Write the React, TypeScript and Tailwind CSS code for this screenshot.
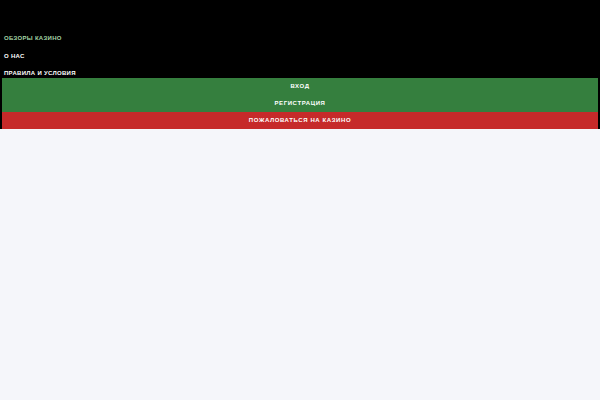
const navLinks = [
  { label: "Обзоры казино", active: true },
  { label: "О нас", active: false },
  { label: "Правила и условия", active: false },
];

const buttons = [
  { label: "Вход", color: "bg-[#357f3e]" },
  { label: "Регистрация", color: "bg-[#357f3e]" },
  { label: "Пожаловаться на казино", color: "bg-[#c62a2a]" },
];

export default function App() {
  return (
    <div className="min-h-screen bg-[#f5f6fa] font-['Liberation_Sans',Arial,sans-serif]">
      <header className="bg-black pt-[34px]">
        <nav className="flex flex-col gap-[9.5px] px-1">
          {navLinks.map(({ label, active }) => (
            <a
              key={label}
              href="#"
              className={`block h-[8px] text-[6px] font-bold uppercase leading-[8px] tracking-[0.3px] ${
                active ? "text-[#a5d6a7]" : "text-white"
              }`}
            >
              {label}
            </a>
          ))}
        </nav>
        <div className="flex flex-col px-[2px] pt-[1px]">
          {buttons.map(({ label, color }) => (
            <button
              key={label}
              type="button"
              className={`h-[17px] ${color} text-[6px] font-bold uppercase tracking-[0.6px] text-white`}
            >
              {label}
            </button>
          ))}
        </div>
      </header>
    </div>
  );
}
